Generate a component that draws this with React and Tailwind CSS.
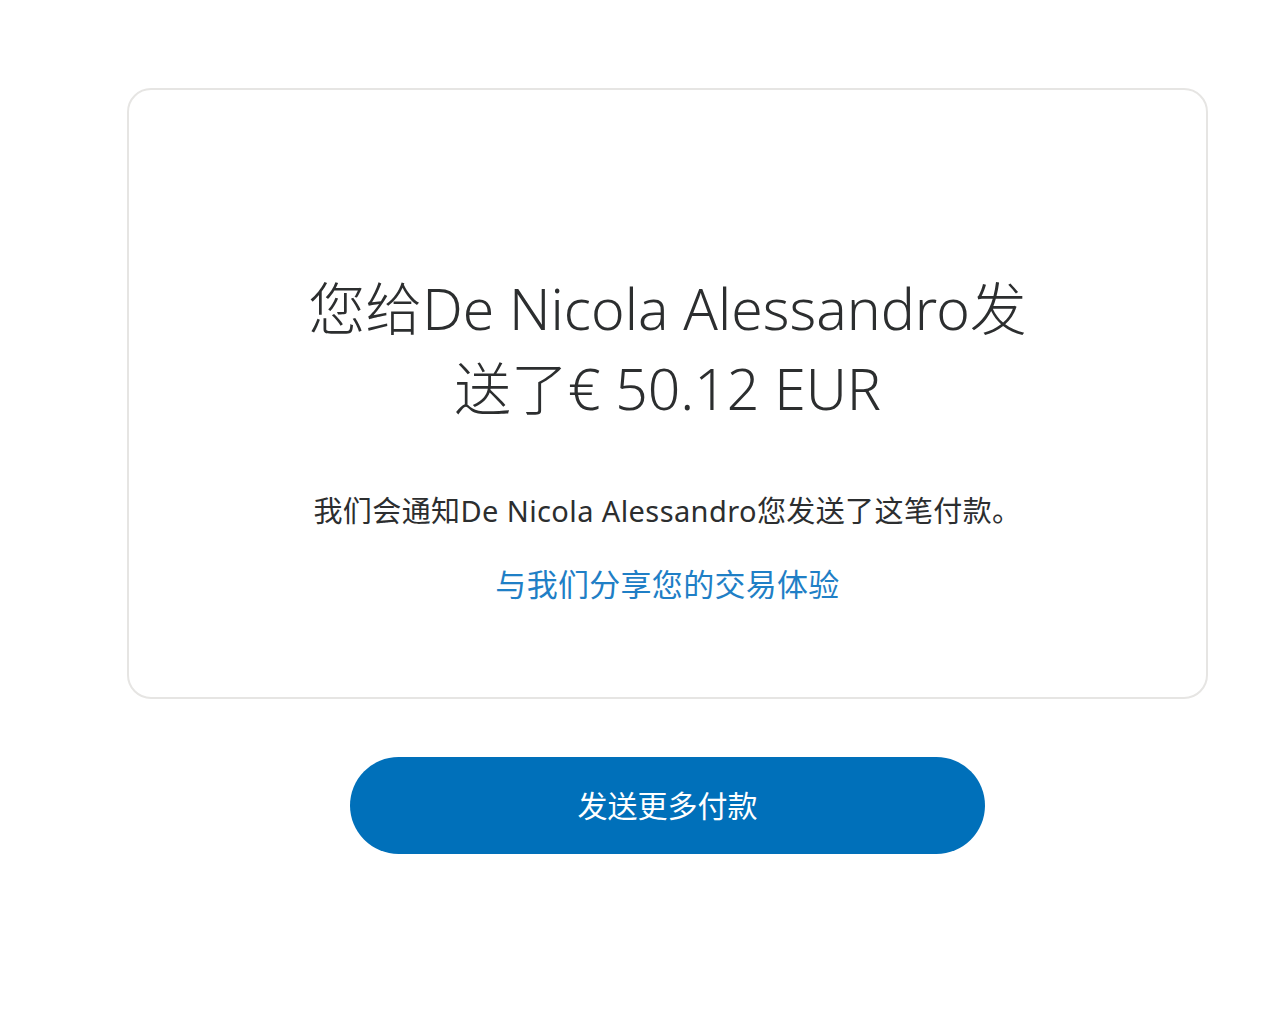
export default function App() {
  const font = { fontFamily: '"Noto Sans", "Noto Sans CJK SC", sans-serif' };

  return (
    <div className="min-h-[1033px] bg-white pt-[88px]" style={font}>
      <div className="ml-[127px] w-[1081px]">
        {/* confirmation card */}
        <div className="rounded-[24px] border-2 border-[#e6e5e3] pt-[178px] pb-[93px] flex flex-col items-center">
          <h1 className="max-w-[760px] text-center text-[57px] leading-[80px] font-light text-[#2c2e2f]">
            您给De Nicola Alessandro发送了€ 50.12 EUR
          </h1>
          <p className="mt-[63px] text-[29px] leading-[40px] tracking-[0.4px] text-[#2c2e2f]">
            我们会通知De Nicola Alessandro您发送了这笔付款。
          </p>
          <a href="#" className="mt-[33px] text-[31px] leading-[40px] tracking-[0.3px] text-[#1f7fc6]">
            与我们分享您的交易体验
          </a>
        </div>

        {/* action */}
        <div className="mt-[58px] flex justify-center">
          <button className="w-[635px] h-[97px] rounded-full bg-[#0070ba] text-white text-[30px]">
            发送更多付款
          </button>
        </div>
      </div>
    </div>
  );
}
